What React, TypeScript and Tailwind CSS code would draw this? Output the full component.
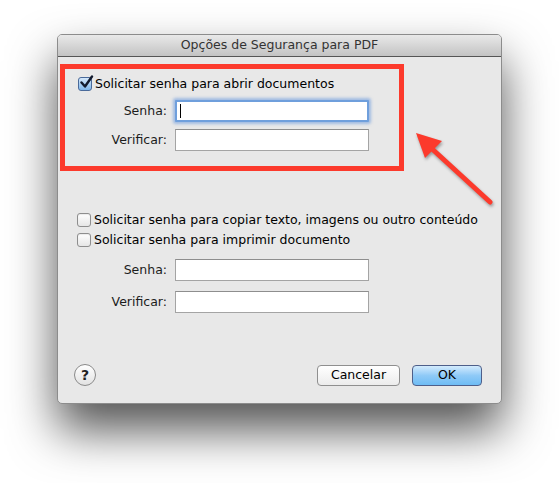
import React from "react";

const font = { fontFamily: '"DejaVu Sans", "Liberation Sans", sans-serif' };

function CheckBox({ checked }: { checked?: boolean }) {
  if (checked) {
    return (
      <div className="relative w-[14px] h-[14px] rounded-[3px] border border-[#4a6a9a] bg-gradient-to-b from-[#d4e8fb] to-[#7fb6ea] shrink-0">
        <svg className="absolute left-[0px] top-[-3px]" width="15" height="15" viewBox="0 0 15 15">
          <path d="M2.5 7.5 L6 11.5 L13 1.5" fill="none" stroke="#111a2e" strokeWidth="2.4" strokeLinecap="round" strokeLinejoin="round" />
        </svg>
      </div>
    );
  }
  return (
    <div className="w-[14px] h-[14px] rounded-[3px] border border-[#8e8e8e] bg-gradient-to-b from-[#ffffff] to-[#e6e6e6] shrink-0 shadow-[inset_0_1px_1px_rgba(0,0,0,0.08)]" />
  );
}

function Field({ focused }: { focused?: boolean }) {
  if (focused) {
    return (
      <div className="relative w-[194px] h-[22px] bg-white border-2 border-[#6f9fdc] shadow-[0_0_3px_2px_rgba(100,150,220,0.55)] rounded-[1px]">
        <span className="absolute left-[3px] top-[2px] w-[1px] h-[14px] bg-black" />
      </div>
    );
  }
  return <div className="w-[194px] h-[22px] bg-white border border-[#a4a4a4] border-t-[#8e8e8e]" />;
}

function Row({ label, labelW, children }: { label: string; labelW: string; children: React.ReactNode }) {
  return (
    <div className="flex items-center h-[22px]">
      <div className={`${labelW} text-right text-[12.5px] text-[#1c1c1c] pr-[8px]`}>{label}</div>
      {children}
    </div>
  );
}

export default function App() {
  return (
    <div className="relative w-[559px] h-[483px] bg-white overflow-hidden" style={font}>
      <div className="pt-[34px] pl-[57px]">
        <div className="w-[445px] h-[370px] flex flex-col rounded-[5px] border border-[#8c8c8c] bg-[#e8e8e8] shadow-[0_26px_48px_rgba(0,0,0,0.68)] overflow-hidden">
          <div className="h-[22px] shrink-0 bg-gradient-to-b from-[#e9e9e9] to-[#c3c3c3] border-b border-[#555] flex items-center justify-center text-[12.5px] text-[#333]">
            Opções de Segurança para PDF
          </div>
          <div className="flex-1 flex flex-col">
            <div className="mt-[7px] ml-[2px] w-[344px] h-[107px] border-[5px] border-[#fc3a2c] pt-[7px] pl-[13px]">
              <div className="flex items-center h-[16px] gap-[3px]">
                <CheckBox checked />
                <span className="text-[12.5px] text-black">Solicitar senha para abrir documentos</span>
              </div>
              <div className="mt-[8px] -ml-[13px]">
                <Row label="Senha:" labelW="w-[110px]">
                  <Field focused />
                </Row>
              </div>
              <div className="mt-[7px] -ml-[13px]">
                <Row label="Verificar:" labelW="w-[110px]">
                  <Field />
                </Row>
              </div>
            </div>
            <div className="mt-[41px] pl-[19px] flex items-center h-[16px] gap-[3px]">
              <CheckBox />
              <span className="text-[12.5px] text-black">Solicitar senha para copiar texto, imagens ou outro conteúdo</span>
            </div>
            <div className="mt-[4px] pl-[19px] flex items-center h-[16px] gap-[3px]">
              <CheckBox />
              <span className="text-[12.5px] text-black">Solicitar senha para imprimir documento</span>
            </div>
            <div className="mt-[11px]">
              <Row label="Senha:" labelW="w-[117px]">
                <Field />
              </Row>
            </div>
            <div className="mt-[10px]">
              <Row label="Verificar:" labelW="w-[117px]">
                <Field />
              </Row>
            </div>
            <div className="mt-[51px] flex items-center pl-[16px] pr-[19px]">
              <div className="w-[22px] h-[22px] rounded-full border border-[#8a8a8a] bg-gradient-to-b from-white to-[#e2e2e2] flex items-center justify-center text-[14px] font-bold text-[#222]">
                ?
              </div>
              <div className="flex-1" />
              <div className="w-[83px] h-[21px] rounded-[4px] border border-[#8f8f8f] bg-gradient-to-b from-white to-[#ececec] flex items-center justify-center text-[12.5px] text-black">
                Cancelar
              </div>
              <div className="ml-[12px] w-[70px] h-[21px] rounded-[4px] border border-[#4e5f8a] bg-gradient-to-b from-[#d3ebfd] via-[#8fcaf7] to-[#6dbcf4] flex items-center justify-center text-[12.5px] text-black">
                OK
              </div>
            </div>
          </div>
        </div>
      </div>
      <svg className="absolute left-[400px] top-[115px]" width="100" height="100" viewBox="0 0 100 100" style={{ filter: "drop-shadow(1px 2px 1.5px rgba(0,0,0,0.35))" }}>
        <line x1="90" y1="87" x2="30" y2="32" stroke="#fc3a2c" strokeWidth="5" strokeLinecap="round" />
        <polygon points="16,18 25,43 42,26" fill="#fc3a2c" />
      </svg>
    </div>
  );
}
